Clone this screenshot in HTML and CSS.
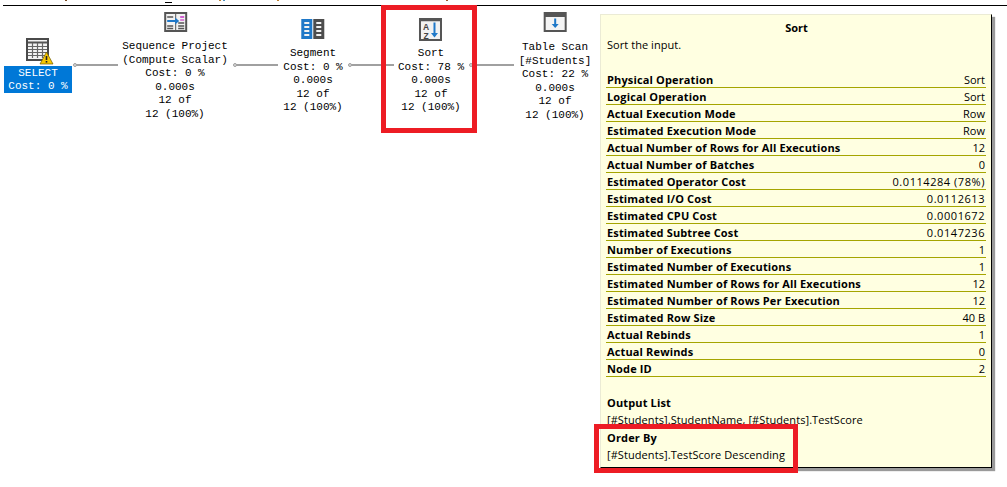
FILE: index.html
```html
<!DOCTYPE html>
<html lang="en">
<head>
<meta charset="utf-8">
<title>Execution plan</title>
<link rel="stylesheet" href="styles.css">
</head>
<body>
<div class="canvas">
  <div class="topstrip"></div>
  <div class="topline"></div>

  <div class="link l1"></div><div class="dot d1"></div>
  <div class="link l2"></div><div class="dot d2"></div>
  <div class="link l3"></div><div class="dot d3"></div>
  <div class="link l4"></div><div class="dot d4"></div>

  <div class="node n-select">
    <svg class="icon" width="24" height="24" viewBox="0 0 24 24">
      <rect x="0" y="0" width="23" height="23" fill="#4a4a4a"/>
      <rect x="2" y="2" width="19" height="19" fill="#f4f4f4"/>
      <path d="M2 4.500h19" stroke="#555" stroke-width="2"/>
      <path d="M2 8.500h19M2 11.500h19M2 14.500h19M2 17.500h19M6.500 5v15M11.500 5v15M16.500 5v15" stroke="#666" stroke-width="1.200"/>
      <path d="M20.500 14l6.500 12h-13z" fill="#f7c600" stroke="#6b5a00" stroke-width=".7"/>
      <rect x="19.700" y="18" width="1.600" height="4" fill="#222"/>
      <rect x="19.700" y="23" width="1.600" height="1.600" fill="#222"/>
    </svg>
    <div class="label selected"><div>SELECT</div><div>Cost: 0 %</div></div>
  </div>

  <div class="node n-seq">
    <svg class="icon" width="24" height="24" viewBox="-1 0 24 24">
      <rect x="0" y="0" width="23" height="20" fill="#555"/>
      <rect x="2" y="2" width="9" height="16" fill="#f2f2f2"/>
      <rect x="12" y="2" width="9" height="16" fill="#f2f2f2"/>
      <path d="M3 5h6M3 14h6M3 16.500h6M14 11h6M14 14h6M14 16.500h6" stroke="#555" stroke-width="1.400"/>
      <path d="M16 5h4" stroke="#c83cc8" stroke-width="1.600"/>
      <path d="M16 8h4" stroke="#c83cc8" stroke-width="1.200"/>
      <path d="M3 9h10" stroke="#1f78c8" stroke-width="2"/>
      <path d="M11 5.500l4 3.500-4 3.500z" fill="#1f78c8"/>
    </svg>
    <div class="label"><div>Sequence Project</div><div>(Compute Scalar)</div><div>Cost: 0 %</div><div>0.000s</div><div>12 of</div><div>12 (100%)</div></div>
  </div>

  <div class="node n-seg">
    <svg class="icon" width="24" height="24" viewBox="0 0 24 24">
      <rect x="0" y="0" width="11" height="20" fill="#1f78c8"/>
      <rect x="12" y="0" width="11" height="20" fill="#4d4d4d"/>
      <path d="M3 4h5M3 8h5M3 12h5M3 16h5M15 4h5M15 8h5M15 12h5M15 16h5" stroke="#f2f2f2" stroke-width="2.200"/>
    </svg>
    <div class="label"><div>Segment</div><div>Cost: 0 %</div><div>0.000s</div><div>12 of</div><div>12 (100%)</div></div>
  </div>

  <div class="node n-sort">
    <svg class="icon" width="24" height="24" viewBox="0 0 24 24">
      <rect x="0" y="0" width="23" height="23" fill="#555"/>
      <rect x="2" y="2" width="19" height="19" fill="#f2f2f2"/>
      <path d="M2 2.500h19" stroke="#555" stroke-width="1.500"/>
      <text class="sort-letter" x="7" y="11.500">A</text>
      <text class="sort-letter" x="7" y="20.500">Z</text>
      <path d="M15.500 4.500v13" stroke="#1f78c8" stroke-width="2"/>
      <path d="M12 15l3.500 4.500 3.500-4.500z" fill="#1f78c8"/>
    </svg>
    <div class="label"><div>Sort</div><div>Cost: 78 %</div><div>0.000s</div><div>12 of</div><div>12 (100%)</div></div>
  </div>

  <div class="node n-scan">
    <svg class="icon" width="24" height="24" viewBox="-1 0 24 24">
      <rect x="0" y="0" width="23" height="20" fill="#555"/>
      <rect x="2" y="5" width="19" height="13" fill="#f4f4f4"/>
      <path d="M11.500 6.500v8" stroke="#1f78c8" stroke-width="2"/>
      <path d="M8 12l3.500 4 3.500-4z" fill="#1f78c8"/>
    </svg>
    <div class="label"><div>Table Scan</div><div>[#Students]</div><div>Cost: 22 %</div><div>0.000s</div><div>12 of</div><div>12 (100%)</div></div>
  </div>

  <div class="tooltip">
    <div class="tt-title">Sort</div>
    <div class="tt-desc">Sort the input.</div>
    <div class="tt-rows">
      <div class="row"><b>Physical Operation</b><span>Sort</span></div>
      <div class="row"><b>Logical Operation</b><span>Sort</span></div>
      <div class="row"><b>Actual Execution Mode</b><span>Row</span></div>
      <div class="row"><b>Estimated Execution Mode</b><span>Row</span></div>
      <div class="row"><b>Actual Number of Rows for All Executions</b><span>12</span></div>
      <div class="row"><b>Actual Number of Batches</b><span>0</span></div>
      <div class="row"><b>Estimated Operator Cost</b><span class="num">0.0114284 (78%)</span></div>
      <div class="row"><b>Estimated I/O Cost</b><span class="num">0.0112613</span></div>
      <div class="row"><b>Estimated CPU Cost</b><span class="num">0.0001672</span></div>
      <div class="row"><b>Estimated Subtree Cost</b><span class="num">0.0147236</span></div>
      <div class="row"><b>Number of Executions</b><span>1</span></div>
      <div class="row"><b>Estimated Number of Executions</b><span>1</span></div>
      <div class="row"><b>Estimated Number of Rows for All Executions</b><span>12</span></div>
      <div class="row"><b>Estimated Number of Rows Per Execution</b><span>12</span></div>
      <div class="row"><b>Estimated Row Size</b><span>40 B</span></div>
      <div class="row"><b>Actual Rebinds</b><span>1</span></div>
      <div class="row"><b>Actual Rewinds</b><span>0</span></div>
      <div class="row"><b>Node ID</b><span>2</span></div>
    </div>
    <div class="tt-head first">Output List</div>
    <div class="tt-text">[#Students].StudentName, [#Students].TestScore</div>
    <div class="tt-head second">Order By</div>
    <div class="tt-text">[#Students].TestScore Descending</div>
  </div>

  <div class="mark mark-sort"></div>
  <div class="mark mark-order"></div>
</div>
</body>
</html>
```
FILE: styles.css
```css
html, body { margin: 0; padding: 0; background: #fff; overflow: hidden; }
.canvas { position: relative; width: 1007px; height: 487px; overflow: hidden; font-family: "Liberation Mono", monospace; color: #000; }
.topstrip {
  height: 5px;
  background:
    linear-gradient(#000, #000) 165px 2px / 7px 1px no-repeat,
    linear-gradient(#7a4a20, #7a4a20) 65px 0 / 2px 1px no-repeat,
    linear-gradient(#c08030, #c08030) 219px 0 / 2px 1px no-repeat,
    linear-gradient(#4a90c0, #4a90c0) 223px 0 / 2px 1px no-repeat,
    linear-gradient(#c08030, #c08030) 277px 0 / 2px 1px no-repeat,
    linear-gradient(#a05a30, #a05a30) 446px 0 / 2px 1px no-repeat;
}
.topline { height: 1px; margin-left: 3px; background: #000; }

.node { position: absolute; display: flex; flex-direction: column; align-items: center; transform: translateX(-50%); }
.icon { display: block; margin-bottom: 4px; overflow: visible; }
.label { font-size: 11px; line-height: 13.5px; text-align: center; white-space: pre; }
.selected { background: #0078d7; color: #fff; width: 68px; padding-top: 1px; line-height: 13px; }
.n-select { left: 38px; top: 38px; }
.n-seq { left: 175px; top: 12px; }
.n-seg { left: 313px; top: 19px; }
.n-sort { left: 431px; top: 18px; }
.n-sort .icon { margin-bottom: 5px; }
.n-scan { left: 555px; top: 12px; }
.n-scan .icon { margin-bottom: 5px; }
.sort-letter { font-family: "Liberation Sans", sans-serif; font-weight: 700; font-size: 8.5px; text-anchor: middle; fill: #444; }

.link { position: absolute; height: 2px; top: 64px; background: #a0a0a0; }
.dot { position: absolute; width: 2px; height: 2px; top: 63px; border: 1px solid #a0a0a0; border-radius: 50%; background: #d8d8d8; }
.l1 { left: 76px; width: 42px; }
.l2 { left: 236px; width: 42px; }
.l3 { left: 351px; width: 43px; }
.l4 { left: 472px; width: 42px; }
.d1 { left: 73px; }
.d2 { left: 233px; }
.d3 { left: 348px; }
.d4 { left: 469px; }

.tooltip { position: absolute; left: 600px; top: 14px; width: 392px; height: 454px; padding: 0 10px 0 6px; box-sizing: border-box; background: #ffffe1; border: 1px solid #ebebd5; border-right: 1px solid #000; border-bottom: 1px solid #000; box-shadow: 3px 3px 1px #9a9a9a; font-family: "Open Sans", "Liberation Sans", sans-serif; font-size: 11px; color: #000; }
.tt-title { text-align: center; font-weight: 700; line-height: 17px; margin-top: 4px; padding-left: 5px; }
.tt-desc { line-height: 17px; letter-spacing: .05px; }
.tt-rows { margin-top: 18px; margin-left: -1px; margin-right: -5px; }
.row { display: flex; justify-content: space-between; height: 16px; line-height: 17px; border-bottom: 1px solid #a5a500; padding: 0 1px; white-space: nowrap; }
.row b { font-weight: 700; letter-spacing: .14px; }
.row .num { letter-spacing: .55px; }
.tt-head { font-weight: 700; line-height: 17px; letter-spacing: .14px; }
.tt-head.first { margin-top: 17px; }
.tt-head.second { margin-top: 1px; }
.tt-text { line-height: 17px; white-space: nowrap; letter-spacing: .08px; }

.mark { position: absolute; border: 5px solid #ed1c24; box-sizing: border-box; }
.mark-sort { left: 381px; top: 5px; width: 96px; height: 128px; }
.mark-order { left: 594px; top: 424px; width: 204px; height: 49px; }
```
